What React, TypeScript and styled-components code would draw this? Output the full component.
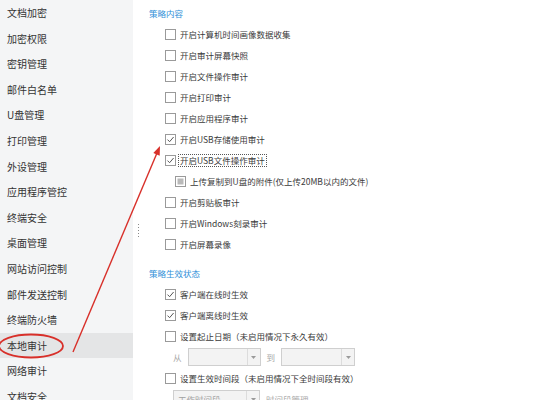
import React from 'react';
import styled, { createGlobalStyle } from 'styled-components';

const GlobalStyle = createGlobalStyle`
  html, body {
    margin: 0;
    padding: 0;
    background: #ffffff;
  }
  body {
    font-family: "Noto Sans CJK SC", "Noto Sans", sans-serif;
  }
`;

const Page = styled.div`
  position: relative;
  display: flex;
  width: 539px;
  height: 400px;
  overflow: hidden;
  background: #ffffff;
`;

const Sidebar = styled.div`
  width: 133px;
  flex: 0 0 133px;
  background: #f4f5f6;
  display: flex;
  flex-direction: column;
`;

const NavItem = styled.div<{ active?: boolean }>`
  height: 25.6px;
  flex: 0 0 25.6px;
  line-height: 25.6px;
  padding-left: 7px;
  font-size: 10px;
  color: #333;
  white-space: nowrap;
  background: ${(p) => (p.active ? '#e4e5e6' : 'transparent')};
`;

const Splitter = styled.div`
  width: 10px;
  flex: 0 0 10px;
  display: flex;
  justify-content: center;
  padding-top: 224px;
`;

const Grip = styled.div`
  width: 1px;
  height: 15px;
  background: repeating-linear-gradient(to bottom, #8a8a8a 0 1px, transparent 1px 3px);
`;

const Main = styled.div`
  flex: 1;
  padding-top: 3px;
  display: flex;
  flex-direction: column;
`;

const SectionTitle = styled.div<{ gap?: number }>`
  height: 21px;
  flex: 0 0 21px;
  line-height: 21px;
  padding-left: 6px;
  margin-top: ${(p) => p.gap ?? 0}px;
  font-size: 8.5px;
  color: #2f8fd8;
`;

const Row = styled.div<{ indent?: number }>`
  height: 21px;
  flex: 0 0 21px;
  display: flex;
  align-items: center;
  padding-left: ${(p) => p.indent ?? 22}px;
  font-size: 8.5px;
  color: #3a3a3a;
  white-space: nowrap;
`;

const Box = styled.span<{ partial?: boolean }>`
  width: 9px;
  height: 9px;
  flex: 0 0 9px;
  border: 1px solid #9a9a9a;
  background: #fff;
  margin-right: 3px;
  display: flex;
  align-items: center;
  justify-content: center;
  box-sizing: content-box;
  ${(p) => (p.partial ? 'box-shadow: inset 0 0 0 1.5px #fff; background-color: #b9b9b9;' : '')}
`;

const Label = styled.span<{ focused?: boolean }>`
  padding: 0 1px;
  outline: ${(p) => (p.focused ? '1px dotted #555' : 'none')};
  outline-offset: 0;
  line-height: 11px;
`;

const Word = styled.span<{ muted?: boolean; space?: number }>`
  color: ${(p) => (p.muted ? '#a8a8a8' : '#3a3a3a')};
  margin-right: ${(p) => p.space ?? 0}px;
`;

const Select = styled.div<{ w: number }>`
  width: ${(p) => p.w}px;
  height: 16px;
  border: 1px solid #cfcfcf;
  background: #f3f3f3;
  display: flex;
  align-items: stretch;
  margin-right: 6px;
  font-size: 8.5px;
  color: #a0a0a0;
`;

const SelectText = styled.div`
  flex: 1;
  display: flex;
  align-items: center;
  padding-left: 4px;
`;

const SelectArrow = styled.div`
  width: 12px;
  border-left: 1px solid #dcdcdc;
  display: flex;
  align-items: center;
  justify-content: center;
`;

const Overlay = styled.svg`
  position: absolute;
  left: 0;
  top: 0;
  pointer-events: none;
`;

const Check = () => (
  <svg width="9" height="9" viewBox="0 0 9 9">
    <path d="M1.5 4.6 L3.6 6.7 L7.6 2" fill="none" stroke="#555" strokeWidth="1" />
  </svg>
);

const Caret = () => (
  <svg width="5" height="3" viewBox="0 0 5 3">
    <path d="M0 0 L5 0 L2.5 3 Z" fill="#9a9a9a" />
  </svg>
);

const navItems = [
  '文档加密', '加密权限', '密钥管理', '邮件白名单', 'U盘管理', '打印管理', '外设管理',
  '应用程序管控', '终端安全', '桌面管理', '网站访问控制', '邮件发送控制', '终端防火墙',
  '本地审计', '网络审计', '文档安全',
];

const auditItems = [
  { text: '开启计算机时间画像数据收集' },
  { text: '开启审计屏幕快照' },
  { text: '开启文件操作审计' },
  { text: '开启打印审计' },
  { text: '开启应用程序审计' },
  { text: '开启USB存储使用审计', checked: true },
  { text: '开启USB文件操作审计', checked: true, focused: true },
  { text: '上传复制到U盘的附件(仅上传20MB以内的文件)', partial: true, indent: 32 },
  { text: '开启剪贴板审计' },
  { text: '开启Windows刻录审计' },
  { text: '开启屏幕录像' },
];

export default function App() {
  return (
    <>
      <GlobalStyle />
      <Page>
        <Sidebar>
          {navItems.map((n) => (
            <NavItem key={n} active={n === '本地审计'}>{n}</NavItem>
          ))}
        </Sidebar>
        <Splitter>
          <Grip />
        </Splitter>
        <Main>
          <SectionTitle>策略内容</SectionTitle>
          {auditItems.map((it) => (
            <Row key={it.text} indent={it.indent}>
              <Box partial={it.partial}>{it.checked ? <Check /> : null}</Box>
              <Label focused={it.focused}>{it.text}</Label>
            </Row>
          ))}

          <SectionTitle gap={7.5}>策略生效状态</SectionTitle>
          <Row>
            <Box><Check /></Box>
            <Label>客户端在线时生效</Label>
          </Row>
          <Row>
            <Box><Check /></Box>
            <Label>客户端离线时生效</Label>
          </Row>
          <Row>
            <Box />
            <Label>设置起止日期（未启用情况下永久有效）</Label>
          </Row>
          <Row indent={30}>
            <Word muted space={6}>从</Word>
            <Select w={71}>
              <SelectText />
              <SelectArrow><Caret /></SelectArrow>
            </Select>
            <Word muted space={6}>到</Word>
            <Select w={72}>
              <SelectText />
              <SelectArrow><Caret /></SelectArrow>
            </Select>
          </Row>
          <Row>
            <Box />
            <Label>设置生效时间段（未启用情况下全时间段有效）</Label>
          </Row>
          <Row indent={30}>
            <Select w={85}>
              <SelectText>工作时间段</SelectText>
              <SelectArrow><Caret /></SelectArrow>
            </Select>
            <Word muted>时间段管理</Word>
          </Row>
        </Main>

        <Overlay width="539" height="400" viewBox="0 0 539 400">
          <ellipse cx="31" cy="346" rx="32" ry="11.5" fill="none" stroke="#d8302a" strokeWidth="1.8" />
          <line x1="73" y1="352" x2="157" y2="153" stroke="#d8302a" strokeWidth="1.4" />
          <polygon points="160,146 159.7,155.7 153.3,152.9" fill="#d8302a" />
        </Overlay>
      </Page>
    </>
  );
}
